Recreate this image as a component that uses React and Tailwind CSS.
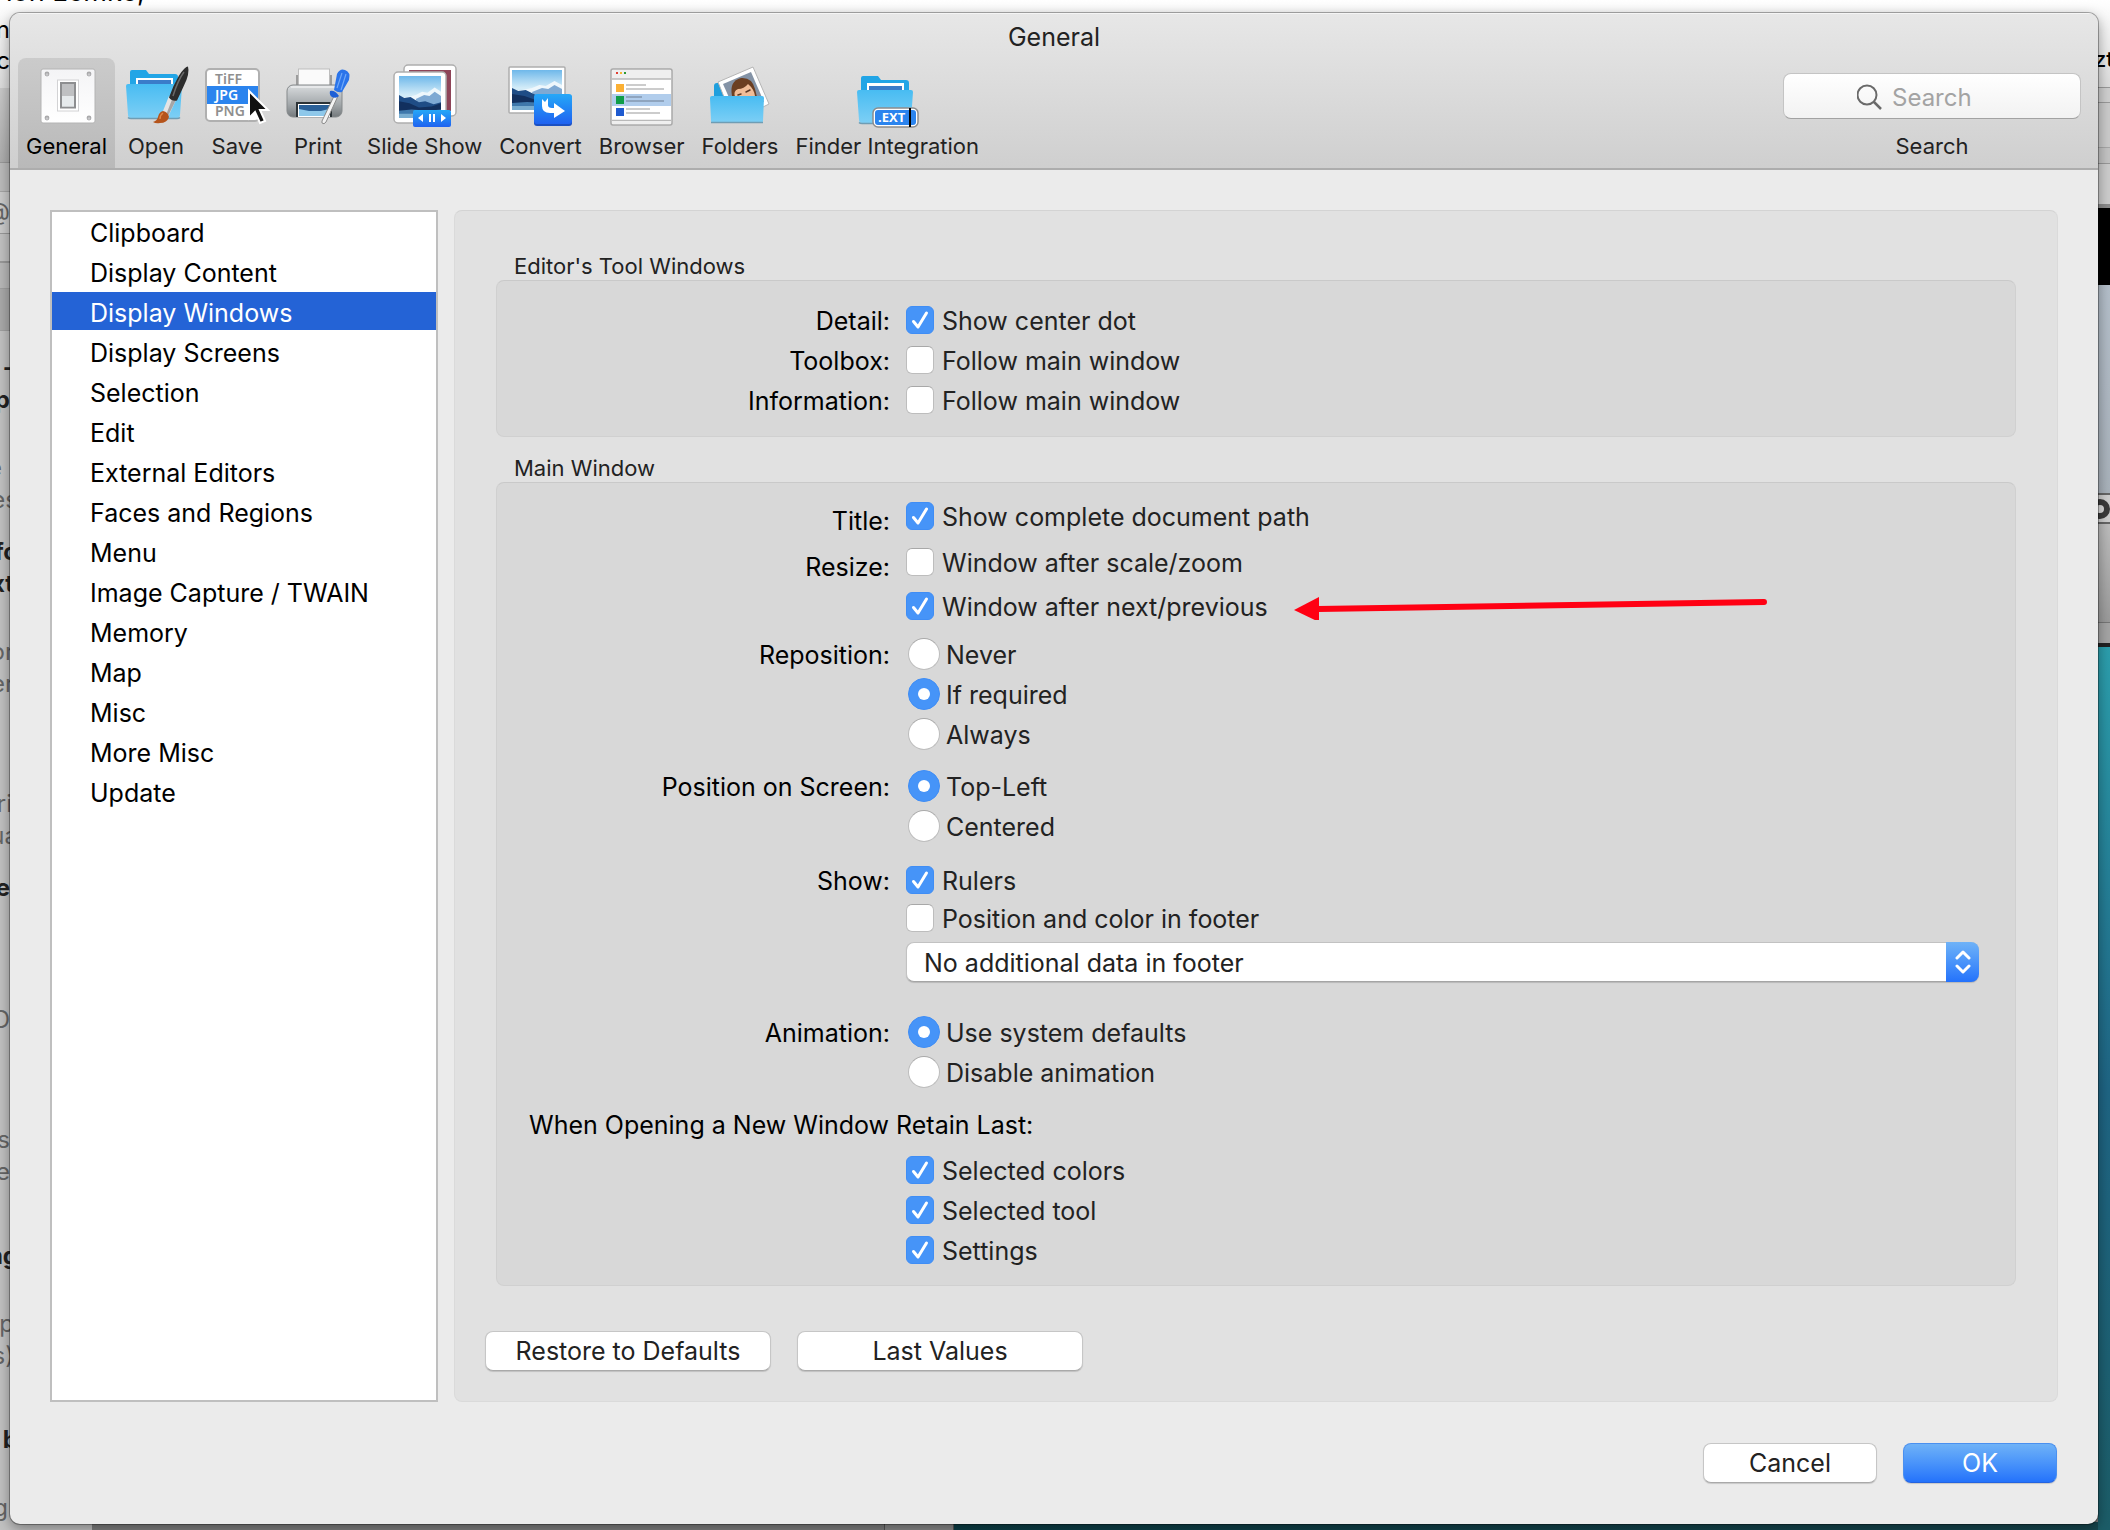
import { useState } from 'react';

const categories = [
  'Clipboard', 'Display Content', 'Display Windows', 'Display Screens', 'Selection', 'Edit',
  'External Editors', 'Faces and Regions', 'Menu', 'Image Capture / TWAIN', 'Memory', 'Map',
  'Misc', 'More Misc', 'Update',
];

/* ---------- Toolbar icons ---------- */

const Gradients = () => (
  <svg width="0" height="0" className="absolute" aria-hidden="true">
    <defs>
      <linearGradient id="folder" x1="0" y1="0" x2="0" y2="1">
        <stop offset="0" stopColor="#48bcf2" />
        <stop offset="1" stopColor="#7dcff5" />
      </linearGradient>
      <linearGradient id="sky" x1="0" y1="0" x2="0" y2="1">
        <stop offset="0" stopColor="#6fb8ea" />
        <stop offset="0.45" stopColor="#d3ecf8" />
        <stop offset="1" stopColor="#b9dcf0" />
      </linearGradient>
      <linearGradient id="badge" x1="0" y1="0" x2="0" y2="1">
        <stop offset="0" stopColor="#25a8f8" />
        <stop offset="1" stopColor="#1f62f0" />
      </linearGradient>
      <linearGradient id="printer" x1="0" y1="0" x2="0" y2="1">
        <stop offset="0" stopColor="#d9dcde" />
        <stop offset="0.6" stopColor="#a3a8ab" />
        <stop offset="1" stopColor="#74797c" />
      </linearGradient>
      <linearGradient id="plate" x1="0" y1="0" x2="0" y2="1">
        <stop offset="0" stopColor="#f4f4f6" />
        <stop offset="1" stopColor="#ffffff" />
      </linearGradient>
    </defs>
  </svg>
);

const Mountains = ({ x, y, width, height }) => (
  <svg x={x} y={y} width={width} height={height} viewBox="0 0 40 40" preserveAspectRatio="none">
    <rect width="40" height="40" fill="url(#sky)" />
    <path d="M0 21l8-1 8-2 6-3 5 1 7-5 6 4v12H0z" fill="#eef7fc" />
    <path d="M16 22l8-4 5 1 5-4 6 4v10H18z" fill="#7ea9d3" />
    <path d="M0 18l5 3 6-1 8 5 6-1 8 3 7-2v9H0z" fill="#1f4d86" />
    <path d="M0 24l10 2 9 4 12-1 9-3v9H0z" fill="#12305e" />
    <path d="M0 33l12-1 16 1 12-1v8H0z" fill="#3f78ab" />
    <path d="M0 36h22l18 1v3H0z" fill="#79add0" />
  </svg>
);

const Svg = ({ children }) => (
  <svg viewBox="0 0 64 64" className="-mx-px size-16 shrink-0 overflow-visible" aria-hidden="true">{children}</svg>
);

const GeneralIcon = () => (
  <Svg>
    <rect x="6" y="5" width="54" height="54" rx="2" fill="url(#plate)" stroke="#b4b4b4" />
    {[[12, 10], [54, 10], [12, 54], [54, 54]].map(([cx, cy]) => (
      <g key={`${cx}-${cy}`}>
        <circle cx={cx} cy={cy} r="2.4" fill="#a9a9ab" />
        <circle cx={cx} cy={cy + 0.5} r="1.2" fill="#c9c9cb" />
      </g>
    ))}
    <rect x="22.500" y="16" width="21" height="31" fill="#fff" stroke="#d2d2d4" />
    <rect x="26" y="19" width="14" height="24.500" fill="#d9dadc" stroke="#8d8e90" strokeWidth="2" />
    <rect x="27" y="20" width="12" height="12" fill="#bfc0c2" />
    <rect x="27" y="32" width="12" height="10.500" fill="#e6eaec" />
  </Svg>
);

const OpenIcon = () => (
  <Svg>
    <path d="M6 8q0-2 2-2h14l3 4h26q3 0 3 3v12H6z" fill="#22a5e6" />
    <rect x="12" y="14" width="37" height="10" fill="#fff" />
    <rect x="14" y="16" width="33" height="8" fill="#3a7cc9" />
    <path d="M2 22q0-2 2-2h52q2 0 2 2l-2 29q0 3-3 3H7q-3 0-3-3z" fill="url(#folder)" />
    <path d="M4 53.500q1 1 3 1h46q2 0 3-1" fill="none" stroke="#6f9db4" strokeWidth="1.500" />
    <path d="M45 32l7 4-8 17q-5-1-5-6z" fill="#e4e4e4" />
    <path d="M49 33l3 3-8 16-2-1z" fill="#a6a6a6" />
    <path d="M64 2.500q2 7-4 19l-7 15q-5 1-8-3 4-12 10-22 6-9 9-9z" fill="#2d2d2d" />
    <path d="M60 8q-6 8-11 24" fill="none" stroke="#6a6a6a" strokeWidth="1.500" />
    <path d="M39 47q5 1 6 6-2 6-9 6-4 1-7-1 4-1 5-5 1-5 5-6z" fill="#b5541b" />
    <path d="M39 49q-3 2-3 6" fill="none" stroke="#e08645" strokeWidth="1.500" />
  </Svg>
);

const SaveIcon = () => (
  <Svg>
    <rect x="1" y="5" width="53" height="52" rx="4" fill="#fff" stroke="#b0b0b0" strokeWidth="2" />
    <rect x="2" y="22" width="51" height="18" fill="#2b84ee" />
    <g className="font-['Noto_Sans',sans-serif] text-[14px] font-semibold">
      <text x="10" y="20" fill="#8f8f8f">TiFF</text>
      <text x="10" y="36" fill="#fff">JPG</text>
      <text x="10" y="52" fill="#8f8f8f">PNG</text>
    </g>
  </Svg>
);

const PrintIcon = () => (
  <Svg>
    <rect x="10" y="11" width="36" height="14" fill="#9c9c9c" />
    <rect x="12.500" y="5" width="31" height="20" fill="#fafafa" stroke="#bdbdbd" />
    <rect x="1" y="21" width="55" height="32" rx="6" fill="url(#printer)" stroke="#85898b" />
    <path d="M5 23h47" stroke="#eceeef" strokeWidth="1.500" />
    <rect x="10" y="38" width="36" height="15" fill="#2c3337" />
    <rect x="12" y="40" width="32" height="13" fill="#fff" />
    <path d="M13 41h30v8H13z" fill="#2a6098" />
    <path d="M13 45l10 2 12 0 8-2v7H13z" fill="#8ec8ea" />
    <path d="M49 30l3 2-12 26q-2 3-4 1l0-2z" fill="#f3f3f3" stroke="#8b8b8b" />
    <path d="M44 27q5-1 9 5-3 3-7 1-3-2-2-6z" fill="#1e5fd6" />
    <path d="M51 10q3-6 8-4 6 2 4 10l-7 12q-4 1-8-2z" fill="#2a74ea" />
    <path d="M56 9l-5 15M60 10l-5 16" stroke="#6fa8f8" strokeWidth="1.200" />
  </Svg>
);

const SlideShowIcon = () => (
  <Svg>
    <rect x="11" y="1" width="52" height="51" rx="4" fill="#fff" stroke="#aeaeae" strokeWidth="1.500" />
    <rect x="16" y="6" width="42" height="41" fill="#8e4458" />
    <rect x="1" y="8" width="52" height="51" rx="4" fill="#fff" stroke="#aeaeae" strokeWidth="1.500" />
    <Mountains x="6" y="12" width="42" height="42" />
    <rect x="20" y="46" width="38" height="17" rx="2" fill="url(#badge)" />
    <path d="M30 50v8l-5-4zM48 50v8l5-4z" fill="#fff" />
    <path d="M37 50v8M41 50v8" stroke="#fff" strokeWidth="2" />
  </Svg>
);

const ConvertIcon = () => (
  <Svg>
    <rect x="1" y="3" width="56" height="46" rx="1" fill="#fff" stroke="#aeaeae" strokeWidth="1.500" />
    <Mountains x="4" y="6" width="50" height="40" />
    <rect x="26" y="31" width="38" height="31" rx="3" fill="#1b50c2" />
    <rect x="26" y="30" width="38" height="30" rx="3" fill="url(#badge)" />
    <path d="M34 35l3 3 3-4v7q0 3 4 3h2v-5l11 8-11 7v-5h-4q-8 0-8-7z" fill="#fff" />
  </Svg>
);

const BrowserIcon = () => (
  <Svg>
    <rect x="1" y="5" width="61" height="56" rx="2" fill="#fff" stroke="#a9a9a9" strokeWidth="1.500" />
    <path d="M2 6h59v9H2z" fill="#efefef" />
    <path d="M2 15h59" stroke="#b9b9b9" strokeWidth="1.500" />
    <path d="M2 56.500h59" stroke="#b9b9b9" strokeWidth="1.500" />
    <path d="M2 57h59v3H2z" fill="#efefef" />
    <rect x="6" y="8" width="2" height="2" fill="#e03e32" />
    <rect x="10" y="8" width="2" height="2" fill="#f4b730" />
    <rect x="14" y="8" width="2" height="2" fill="#2c9a35" />
    <rect x="2" y="30" width="59" height="12" fill="#b1cdec" />
    <rect x="6" y="20" width="8" height="8" fill="#fbb034" />
    <rect x="6" y="32" width="8" height="8" fill="#0f9d48" />
    <rect x="6" y="44" width="8" height="8" fill="#1f5bd0" />
    <path d="M16 21h20M16 25h38M16 45h24M16 49h34" stroke="#bcbcbc" strokeWidth="1.500" />
    <path d="M16 33h16M16 37h38" stroke="#8498b0" strokeWidth="1.500" />
  </Svg>
);

const FoldersIcon = () => (
  <Svg>
    <path d="M6 22q0-3 3-3h20v20H6z" fill="#1f9fdd" />
    <path d="M10 18l35-15 16 37-6 3H20z" fill="#fff" stroke="#b5b5b5" />
    <path d="M15 20l28-12 13 30H23z" fill="#8493a6" />
    <path d="M24 32q-3-15 9-18 11-1 14 11l3 12H26z" fill="#6b3f22" />
    <path d="M27 33q-2-6 3-8 6 0 10-5 6 5 7 12l1 5H28z" fill="#f0bd98" />
    <path d="M38 28l4-2M30 31l3-1" stroke="#5a3826" strokeWidth="1.500" strokeLinecap="round" />
    <path d="M2 34q0-2 2-2h50q2 0 2 2l-1 23q0 2-2 2H5q-2 0-2-2z" fill="url(#folder)" />
    <path d="M3 58.500h52" stroke="#6f9db4" strokeWidth="1.500" />
  </Svg>
);

const FinderIcon = () => (
  <Svg>
    <path d="M6 14q0-2 2-2h15l3 4h25q3 0 3 3v10H6z" fill="#22a5e6" />
    <rect x="12" y="19" width="37" height="9" fill="#fff" />
    <rect x="14" y="22" width="33" height="6" fill="#3a7cc9" />
    <path d="M2 28q0-2 2-2h52q2 0 2 2l-2 28q0 3-3 3H7q-3 0-3-3z" fill="url(#folder)" />
    <path d="M4 58.500q1 1 3 1h46" fill="none" stroke="#6f9db4" strokeWidth="1.500" />
    <rect x="18" y="44" width="45" height="19" rx="5" fill="#fff" stroke="#8c8c8c" strokeWidth="1.500" />
    <rect x="20" y="46" width="41" height="15" rx="3" fill="#2b84ee" />
    <text x="23" y="58" fill="#fff" className="font-['Open_Sans',sans-serif] text-[13px] font-bold">.EXT</text>
    <path d="M55 44v19" stroke="#000" strokeWidth="2" />
  </Svg>
);

const Cursor = () => (
  <svg viewBox="0 0 20 34" className="absolute left-[51px] top-8 h-[34px] w-5 overflow-visible" aria-hidden="true">
    <path d="M1 1v27l6-6 5 11 5-2-5-11h8z" fill="#111" stroke="#fff" strokeWidth="2" />
  </svg>
);

const tools = [
  { label: 'General', Icon: GeneralIcon },
  { label: 'Open', Icon: OpenIcon },
  { label: 'Save', Icon: SaveIcon },
  { label: 'Print', Icon: PrintIcon },
  { label: 'Slide Show', Icon: SlideShowIcon },
  { label: 'Convert', Icon: ConvertIcon },
  { label: 'Browser', Icon: BrowserIcon },
  { label: 'Folders', Icon: FoldersIcon },
  { label: 'Finder Integration', Icon: FinderIcon },
];

/* ---------- Form controls ---------- */

const Check = ({ label, defaultChecked, children }) => (
  <div className="flex h-10 items-center">
    <label className="flex items-center gap-2">
      <span className="grid">
        <input type="checkbox" defaultChecked={defaultChecked}
          className="peer col-start-1 row-start-1 size-7 appearance-none rounded-[6px] border border-[#bdbdbd] border-t-[#a8a8a8] bg-white checked:border-[#3f8df5] checked:bg-[#4694f8]" />
        <svg viewBox="0 0 28 28" className="pointer-events-none invisible col-start-1 row-start-1 size-7 peer-checked:visible" aria-hidden="true">
          <path d="M7.500 15.500l4.500 5.500 8.500-14" fill="none" stroke="#fff" strokeWidth="3" strokeLinecap="round" strokeLinejoin="round" />
        </svg>
      </span>
      <span className="pt-0.5">{label}</span>
    </label>
    {children}
  </div>
);

const Radio = ({ name, label, defaultChecked }) => (
  <label className="ml-0.5 flex h-10 items-center gap-1.5">
    <span className="grid place-items-center">
      <input type="radio" name={name} defaultChecked={defaultChecked}
        className="peer col-start-1 row-start-1 size-8 appearance-none rounded-full border border-[#bdbdbd] border-t-[#a8a8a8] bg-white checked:border-[#3f8df5] checked:bg-[#4694f8]" />
      <span className="pointer-events-none invisible col-start-1 row-start-1 size-3 rounded-full bg-white peer-checked:visible" />
    </span>
    <span className="pt-0.5">{label}</span>
  </label>
);

const Field = ({ label, low, className = '', children }) => (
  <div role="group" aria-label={label} className={`flex ${className}`}>
    <div className={`flex w-[393px] shrink-0 items-center justify-end pt-0.5 text-black ${low ? 'h-12' : 'h-10'}`}>{label}</div>
    <div className="ml-4 mr-9 flex-1">{children}</div>
  </div>
);

const Group = ({ title, className = '', bodyClass, children }) => (
  <section className={`mx-[11px] ${className}`}>
    <h2 className="pl-[18px] pt-px text-[22px] leading-[27px]">{title}</h2>
    <div className={`rounded-lg border border-[#d0d0d0] border-t-[#c9c9c9] bg-[#d8d8d8] ${bodyClass}`}>{children}</div>
  </section>
);

const Arrow = () => (
  <svg viewBox="0 0 474 28" className="ml-[26px] h-7 w-[474px]" aria-hidden="true">
    <path d="M24 17L470 10" stroke="#ff0013" strokeWidth="6" strokeLinecap="round" />
    <path d="M0 18L25 5v25z" fill="#ff0013" />
  </svg>
);

const PushButton = ({ primary, className, children }) => (
  <button type="button"
    className={`h-10 rounded-lg border leading-none shadow-[0_1px_1px_rgba(0,0,0,0.15)] ${
      primary
        ? 'border-[#4a90f0] border-b-[#2463e0] bg-linear-to-b from-[#6fb2f7] to-[#2472fb] text-white'
        : 'border-[#c6c6c6] border-b-[#a9a9a9] bg-white'
    } ${className}`}>
    {children}
  </button>
);

/* ---------- Windows behind the dialog ---------- */

const fragments = [
  { text: 'n', look: 'top-[12px] w-2.5 text-black' },
  { text: 'c', look: 'top-[43px] w-2.5 text-black' },
  { text: '@', look: 'top-[194px] w-2.5 text-[#666]' },
  { text: '-', look: 'top-[350px] w-3.5 font-bold text-[#222]' },
  { text: 'p', look: 'top-[382px] w-2.5 font-bold text-[#222]' },
  { text: 'e', look: 'top-[450px] w-0.5 text-[#666]' },
  { text: 'es', look: 'top-[482px] w-[18px] text-[#666]' },
  { text: 'fo', look: 'top-[534px] w-[18px] font-bold text-[#222]' },
  { text: 'xt', look: 'top-[566px] w-3.5 font-bold text-[#222]' },
  { text: 'or', look: 'top-[634px] w-3.5 text-[#666]' },
  { text: 'er', look: 'top-[666px] w-3.5 text-[#666]' },
  { text: 'ri', look: 'top-[786px] w-3 text-[#666]' },
  { text: 'ua', look: 'top-[818px] w-[18px] text-[#666]' },
  { text: 'e', look: 'top-[870px] w-2.5 font-bold text-[#222]' },
  { text: 'D', look: 'top-[1002px] w-2.5 text-[#666]' },
  { text: 's', look: 'top-[1122px] w-2.5 text-[#666]' },
  { text: 'e', look: 'top-[1154px] w-2.5 text-[#666]' },
  { text: 'ng', look: 'top-[1238px] w-[18px] font-bold text-[#222]' },
  { text: 'p', look: 'top-[1306px] w-3.5 text-[#666]' },
  { text: 's)', look: 'top-[1338px] w-3.5 text-[#666]' },
  { text: 'b', look: 'top-[1422px] w-[18px] font-bold text-[#222]' },
  { text: 'g', look: 'top-[1490px] w-2 text-[#666]' },
];

const Desktop = () => (
  <div className="absolute inset-0 overflow-hidden bg-[#7f7f7f]" aria-hidden="true">
    <div className="absolute inset-x-0 top-0 h-[88px] bg-linear-to-b from-white to-[#dcdcdc]" />
    <div className="absolute left-1.5 -top-6 text-[27px] leading-8 text-black">ion Lemke,</div>

    <div className="absolute bottom-0 left-0 top-[88px] w-[92px] bg-[#c2c2c2]">
      <div className="h-[75px] border-b border-[#999] bg-linear-to-b from-[#c9c9c9] to-[#adadad]" />
      <div className="h-[29px] border-b border-[#a5a5a5] bg-[#bcbcbc]" />
      <div className="h-[42px] border-b border-[#999] bg-[#cbcbcb]" />
      <div className="h-[29px] border-b-2 border-[#999]" />
      <div className="h-[25px] bg-[#b9b9b9]" />
      <div className="h-[43px] border-y border-[#a0a0a0] bg-[#aaa]" />
    </div>
    {fragments.map((f) => (
      <div key={f.look} className={`absolute left-0 flex justify-end overflow-hidden text-[24px] leading-9 ${f.look}`}>
        {f.text}
      </div>
    ))}

    <div className="absolute inset-y-0 right-0 flex w-3 flex-col overflow-hidden">
      <div className="-ml-1 h-[87px] pt-[43px] text-[22px] font-medium leading-8 text-black">zt</div>
      <div className="h-4 border-y border-[#9a9a9a] bg-[#d0d0d0]" />
      <div className="h-[45px] border-b border-[#a8a8a8] bg-[#cbcbcb]" />
      <div className="h-4 border-b border-[#999] bg-[#c4c4c4]" />
      <div className="h-[40px] bg-[#cdcdcd]" />
      <div className="h-1 bg-[#8c8c8c]" />
      <div className="h-[77px] bg-black" />
      <div className="h-[208px] bg-linear-to-b from-[#b4bfca] to-[#a9b2bb]" />
      <div className="flex h-[31px] items-center border-y-2 border-[#666] bg-[#cfcfcf]">
        <span className="-ml-2 size-5 shrink-0 rounded-full border-[6px] border-[#3b3b3b] bg-[#ddd]" />
      </div>
      <div className="h-[99px] border-b border-[#777] bg-linear-to-b from-[#bdbdbd] to-[#9b9b9b]" />
      <div className="h-5 bg-[#a5a5a5]" />
      <div className="h-1 bg-[#222]" />
      <div className="flex-1 bg-linear-to-b from-[#2c9fad] via-[#1f6584] to-[#1c5d68]" />
    </div>

    <div className="absolute bottom-0 left-[884px] h-2 w-[70px] border-x border-[#555] bg-[#8a8a8a]" />
    <div className="absolute bottom-0 left-[954px] right-3 h-2 bg-linear-to-r from-[#0c3f47] to-[#17474f]" />
  </div>
);

const App = () => {
  const [tool, setTool] = useState('General');
  const [category, setCategory] = useState('Display Windows');

  return (
    <div className="relative min-h-screen pb-1.5 pl-2.5 pr-3 pt-[13px] font-['Inter',sans-serif] text-[25px] leading-8 text-[#222]">
      <Desktop />
      <Gradients />

      <main className="relative overflow-hidden rounded-[10px] bg-[#ebebeb] shadow-[0_0_0_1px_rgba(0,0,0,0.3),0_4px_14px_rgba(0,0,0,0.4)]">
        {/* Title bar and toolbar */}
        <header className="h-[157px] border-b-2 border-[#adadad] border-t border-t-[#f5f5f5] bg-linear-to-b from-[#e7e7e7] to-[#cfcfcf]">
          <h1 className="h-11 pt-[7px] text-center">General</h1>
          <div className="flex items-start justify-between pl-2 pr-[17px]">
            <nav className="flex gap-px text-[22px] leading-7">
              {tools.map(({ label, Icon }) => (
                <button key={label} type="button" onClick={() => setTool(label)}
                  className={`relative flex h-[110px] min-w-20 flex-col items-center rounded-t-lg px-2 pt-1.5 ${tool === label ? 'bg-linear-to-b from-[#cbcbcb] to-[#b9b9b9] text-black' : ''}`}>
                  <Icon />
                  <span className="mt-1 whitespace-nowrap">{label}</span>
                  {label === 'Save' && <Cursor />}
                </button>
              ))}
            </nav>
            <div className="flex flex-col items-center pt-[15px]">
              <div className="relative">
                <svg viewBox="0 0 26 26" className="absolute left-[74px] top-[11px] size-[26px]" aria-hidden="true">
                  <circle cx="10" cy="11" r="9.500" fill="none" stroke="#6a6a6a" strokeWidth="2" />
                  <path d="M17 18l7 7" stroke="#6a6a6a" strokeWidth="2.500" />
                </svg>
                <input id="search" type="text" placeholder="Search"
                  className="h-[46px] w-[298px] rounded-lg border border-[#c4c4c4] border-b-[#a2a2a2] bg-linear-to-b from-white to-[#f2f2f2] pl-[108px] pt-0.5 text-[24px] outline-none placeholder:text-[#a3a3a3]" />
              </div>
              <label htmlFor="search" className="mt-[13px] text-[22px] leading-7">Search</label>
            </div>
          </div>
        </header>

        <div className="flex gap-4 px-10 pt-10">
          {/* Categories */}
          <ul className="w-[388px] shrink-0 border-2 border-[#bfbfbf] bg-white text-black">
            {categories.map((name) => (
              <li key={name} className="mb-0.5">
                <button type="button" onClick={() => setCategory(name)}
                  className={`block h-[38px] w-full pl-[38px] pt-1 text-left ${category === name ? 'bg-[#2463d6] text-white' : ''}`}>
                  {name}
                </button>
              </li>
            ))}
          </ul>

          {/* Settings */}
          <div className="flex-1 rounded-lg border border-[#dadada] border-t-[#d3d3d3] bg-[#e1e1e1] px-[30px] pb-[30px] pt-[41px]">
            <Group title="Editor's Tool Windows" bodyClass="pb-4 pt-[19px]">
              <Field label="Detail:"><Check label="Show center dot" defaultChecked /></Field>
              <Field label="Toolbox:"><Check label="Follow main window" /></Field>
              <Field label="Information:"><Check label="Follow main window" /></Field>
            </Group>

            <Group title="Main Window" className="mt-[17px]" bodyClass="pb-[15px] pt-[13px]">
              <Field label="Title:" low className="h-[46px]"><Check label="Show complete document path" defaultChecked /></Field>
              <Field label="Resize:" low>
                <div className="flex flex-col gap-1">
                  <Check label="Window after scale/zoom" />
                  <Check label="Window after next/previous" defaultChecked><Arrow /></Check>
                </div>
              </Field>
              <Field label="Reposition:" className="mt-2">
                <Radio name="reposition" label="Never" />
                <Radio name="reposition" label="If required" defaultChecked />
                <Radio name="reposition" label="Always" />
              </Field>
              <Field label="Position on Screen:" className="mt-3">
                <Radio name="position" label="Top-Left" defaultChecked />
                <Radio name="position" label="Centered" />
              </Field>
              <Field label="Show:" className="mt-3.5">
                <div className="-space-y-0.5">
                  <Check label="Rulers" defaultChecked />
                  <Check label="Position and color in footer" />
                </div>
                <div className="relative mt-1">
                  <select aria-label="Footer data"
                    className="block h-10 w-full appearance-none rounded-lg border border-[#c2c2c2] border-b-[#a5a5a5] bg-white pl-[17px] pt-0.5 shadow-[0_1px_1px_rgba(0,0,0,0.15)]">
                    <option>No additional data in footer</option>
                  </select>
                  <span className="pointer-events-none absolute inset-y-0 right-0 grid w-[33px] place-items-center rounded-r-lg bg-linear-to-b from-[#6fb2f7] to-[#2472fb]">
                    <svg viewBox="0 0 16 26" className="h-[26px] w-4" aria-hidden="true">
                      <path d="M2 9l6-6 6 6M2 17l6 6 6-6" fill="none" stroke="#fff" strokeWidth="3" strokeLinecap="round" strokeLinejoin="round" />
                    </svg>
                  </span>
                </div>
              </Field>
              <Field label="Animation:" className="mt-[30px]">
                <Radio name="animation" label="Use system defaults" defaultChecked />
                <Radio name="animation" label="Disable animation" />
              </Field>
              <h3 className="mt-3 flex h-10 items-center pl-8 pt-0.5 text-black">When Opening a New Window Retain Last:</h3>
              <Field className="mt-1.5">
                <Check label="Selected colors" defaultChecked />
                <Check label="Selected tool" defaultChecked />
                <Check label="Settings" defaultChecked />
              </Field>
            </Group>

            <div className="mt-[45px] flex gap-[26px]">
              <PushButton className="w-[286px]">Restore to Defaults</PushButton>
              <PushButton className="w-[286px]">Last Values</PushButton>
            </div>
          </div>
        </div>

        <footer className="flex justify-end gap-[26px] px-[41px] py-[41px]">
          <PushButton className="w-[174px]">Cancel</PushButton>
          <PushButton primary className="w-[154px]">OK</PushButton>
        </footer>
      </main>
    </div>
  );
};

export default App;
